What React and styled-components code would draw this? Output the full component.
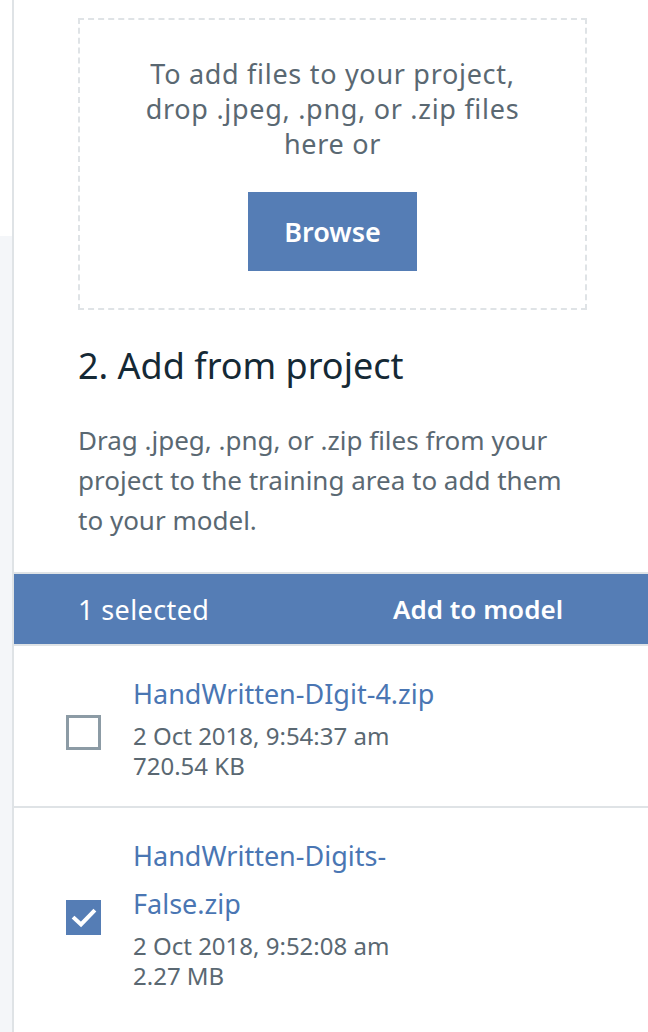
import React from "react"
import styled, { createGlobalStyle } from "styled-components"

const GlobalStyle = createGlobalStyle`
  html, body {
    margin: 0;
    padding: 0;
    background: #fff;
  }
  body {
    font-family: "Noto Sans", "Open Sans", sans-serif;
    -webkit-font-smoothing: antialiased;
  }
`

const Page = styled.div`
  display: flex;
  width: 648px;
  height: 1032px;
  overflow: hidden;
`

const Rail = styled.div`
  flex: 0 0 12px;
  display: flex;
  flex-direction: column;
  border-right: 2px solid #dfe3e6;
`

const RailTop = styled.div`
  height: 236px;
  background: #fff;
`

const RailBottom = styled.div`
  flex: 1;
  background: #f4f6f9;
`

const Panel = styled.div`
  flex: 1;
  display: flex;
  flex-direction: column;
  padding-top: 18px;
`

const Section = styled.div`
  padding: 0 61px 0 64px;
`

const DropZone = styled.div`
  border: 2px dashed #dfe3e6;
  height: 292px;
  box-sizing: border-box;
  display: flex;
  flex-direction: column;
  align-items: center;
  padding-top: 36px;
`

const DropText = styled.p`
  margin: 0;
  text-align: center;
  font-size: 27px;
  line-height: 35px;
  letter-spacing: 0.7px;
  color: #5a6872;
  width: 420px;
`

const BrowseButton = styled.button`
  margin-top: 31px;
  width: 169px;
  height: 79px;
  border: none;
  background: #557db5;
  color: #fff;
  font-family: inherit;
  font-size: 27px;
  font-weight: 600;
`

const Heading = styled.h2`
  margin: 34px 0 0;
  font-size: 36px;
  line-height: 44px;
  font-weight: 400;
  color: #152935;
`

const Description = styled.p`
  margin: 32px 0 0;
  font-size: 26px;
  line-height: 40px;
  color: #5a6872;
  width: 495px;
`

const SelectionBar = styled.div`
  margin-top: 32px;
  border-top: 2px solid #dfe3e6;
  border-bottom: 2px solid #dfe3e6;
  height: 70px;
  background: #557db5;
  display: flex;
  align-items: center;
  justify-content: space-between;
  padding: 0 85px 0 64px;
  color: #fff;
  font-size: 27px;
  letter-spacing: 0.4px;
`

const BarAction = styled.span`
  font-weight: 600;
  font-size: 26px;
  letter-spacing: 0;
`

const FileRow = styled.div`
  display: flex;
  align-items: center;
  gap: 32px;
  padding: 24px 0 25px 52px;
  border-bottom: 2px solid #dfe3e6;

  &:last-child {
    border-bottom: none;
  }
`

const Box = styled.span`
  flex: 0 0 35px;
  height: 35px;
  box-sizing: border-box;
  margin-top: ${(p) => p.$offset}px;
  border: 3px solid ${(p) => (p.$checked ? "#557db5" : "#8c9ba5")};
  background: ${(p) => (p.$checked ? "#557db5" : "#fff")};
  display: flex;
  align-items: center;
  justify-content: center;
`

const FileInfo = styled.div`
  display: flex;
  flex-direction: column;
  width: 330px;
`

const FileName = styled.a`
  font-size: 27px;
  line-height: 48px;
  color: #4a76b3;
  text-decoration: none;
  margin-bottom: 3px;
`

const Meta = styled.span`
  font-size: 24px;
  line-height: 30px;
  color: #5a6872;
`

const files = [
  { name: "HandWritten-DIgit-4.zip", date: "2 Oct 2018, 9:54:37 am", size: "720.54 KB", checked: false, offset: 14 },
  { name: "HandWritten-Digits-False.zip", date: "2 Oct 2018, 9:52:08 am", size: "2.27 MB", checked: true, offset: 12 },
]

const Check = () => (
  <svg width="26" height="22" viewBox="0 0 26 22">
    <path d="M3.5 11.5 L10 17.5 L22.5 4.5" fill="none" stroke="#fff" strokeWidth="4" strokeLinecap="square" />
  </svg>
)

export default function App() {
  return (
    <Page>
      <GlobalStyle />
      <Rail>
        <RailTop />
        <RailBottom />
      </Rail>
      <Panel>
        <Section>
          <DropZone>
            <DropText>To add files to your project, drop .jpeg, .png, or .zip files here or</DropText>
            <BrowseButton>Browse</BrowseButton>
          </DropZone>
          <Heading>2. Add from project</Heading>
          <Description>
            Drag .jpeg, .png, or .zip files from your project to the training area to add them to your model.
          </Description>
        </Section>
        <SelectionBar>
          <span>1 selected</span>
          <BarAction>Add to model</BarAction>
        </SelectionBar>
        {files.map((f) => (
          <FileRow key={f.name}>
            <Box $checked={f.checked} $offset={f.offset}>
              {f.checked && <Check />}
            </Box>
            <FileInfo>
              <FileName href="#">{f.name}</FileName>
              <Meta>{f.date}</Meta>
              <Meta>{f.size}</Meta>
            </FileInfo>
          </FileRow>
        ))}
      </Panel>
    </Page>
  )
}
